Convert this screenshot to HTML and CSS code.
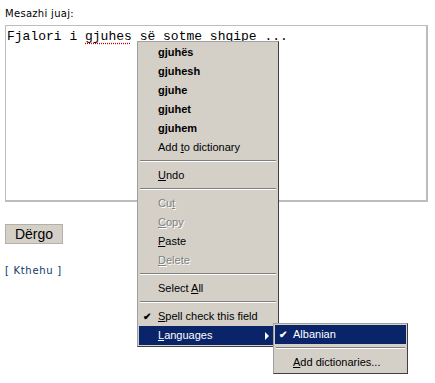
FILE: index.html
```html
<!DOCTYPE html>
<html>
<head>
    <meta charset="utf-8">
    <link rel="stylesheet" href="styles.css">
</head>
<body>
<form class="msg-form">
    <div class="label">Mesazhi juaj:</div>
    <div class="textbox">Fjalori i <span class="typo">gjuhes</span> së sotme shqipe ...</div>
    <div class="button-row">
        <button type="button" class="send">Dërgo</button>
    </div>
    <div class="back"><a href="#">[ Kthehu ]</a></div>
</form>

<div class="menu main-menu">
    <div class="item bold">gjuhës</div>
    <div class="item bold">gjuhesh</div>
    <div class="item bold">gjuhe</div>
    <div class="item bold">gjuhet</div>
    <div class="item bold">gjuhem</div>
    <div class="item">Add <u>t</u>o dictionary</div>
    <div class="sep"></div>
    <div class="item"><u>U</u>ndo</div>
    <div class="sep"></div>
    <div class="item disabled">Cu<u>t</u></div>
    <div class="item disabled"><u>C</u>opy</div>
    <div class="item"><u>P</u>aste</div>
    <div class="item disabled"><u>D</u>elete</div>
    <div class="sep"></div>
    <div class="item">Select <u>A</u>ll</div>
    <div class="sep"></div>
    <div class="item checked"><u>S</u>pell check this field</div>
    <div class="item active has-sub"><u>L</u>anguages</div>
</div>

<div class="menu sub-menu">
    <div class="item active checked">Albanian</div>
    <div class="sep"></div>
    <div class="item"><u>A</u>dd dictionaries...</div>
</div>
</body>
</html>
```

FILE: styles.css
```css
body {
    margin: 0;
    padding: 8px 5px 0 5px;
    background: #fff;
}

.label {
    font: 10px/12px "DejaVu Sans", sans-serif;
    letter-spacing: 0.3px;
    color: #000;
    margin-bottom: 5px;
}

.textbox {
    /* looks like a textarea but lets us mark the typo */
    width: 418px;
    height: 170px;
    border: 2px solid #bcbcbc;
    border-width: 1px 2px 2px 1px;
    padding: 4px 1px 0 1px;
    font: 13px/14px "Liberation Mono", monospace;
    color: #000;
}

.typo {
    text-decoration: underline dotted #c00000;
    text-underline-offset: 3px;
}

.button-row {
    margin-top: 22px;
}

.send {
    width: 58px;
    height: 20px;
    padding: 0;
    background: #d4d0c8;
    border: 1px solid #b4b0a8;
    font: 14px/16px "Liberation Sans", sans-serif;
    color: #000;
}

.back {
    margin-top: 21px;
    font: 10px/12px "DejaVu Sans", sans-serif;
    letter-spacing: 0.7px;
}

.back a {
    color: #0b3a6b;
    text-decoration: none;
}

/* popup menus, win2000 style */
.menu {
    position: absolute;
    background: #d4d0c8;
    border: 1px solid #808080;
    border-color: #a0a0a0 #404040 #404040 #a0a0a0;
    padding: 1px;
    font: 11px "Liberation Sans", sans-serif;
    color: #000;
}

.main-menu {
    left: 137px;
    top: 41px;
    width: 138px;
}

.sub-menu {
    left: 273px;
    top: 323px;
    width: 131px;
}

.item {
    position: relative;
    height: 19px;
    line-height: 19px;
    padding-left: 19px;
    white-space: nowrap;
}

.sub-menu .item {
    padding-left: 18px;
}

.item.bold {
    font-weight: bold;
}

.item.disabled {
    color: #808080;
    text-shadow: 1px 1px 0 #fff;
}

.item.active {
    background: #0a246a;
    color: #fff;
}

.item.checked::before {
    content: "\2714";
    position: absolute;
    left: 4px;
    top: 0;
    font-size: 10px;
    font-weight: bold;
}

.item.has-sub::after {
    content: "";
    position: absolute;
    right: 8px;
    top: 6px;
    border-left: 4px solid currentColor;
    border-top: 4px solid transparent;
    border-bottom: 4px solid transparent;
}

.sep {
    height: 9px;
    position: relative;
}

.sep::before {
    content: "";
    position: absolute;
    left: 1px;
    right: 1px;
    top: 3px;
    border-top: 1px solid #808080;
    border-bottom: 1px solid #fff;
}
```
